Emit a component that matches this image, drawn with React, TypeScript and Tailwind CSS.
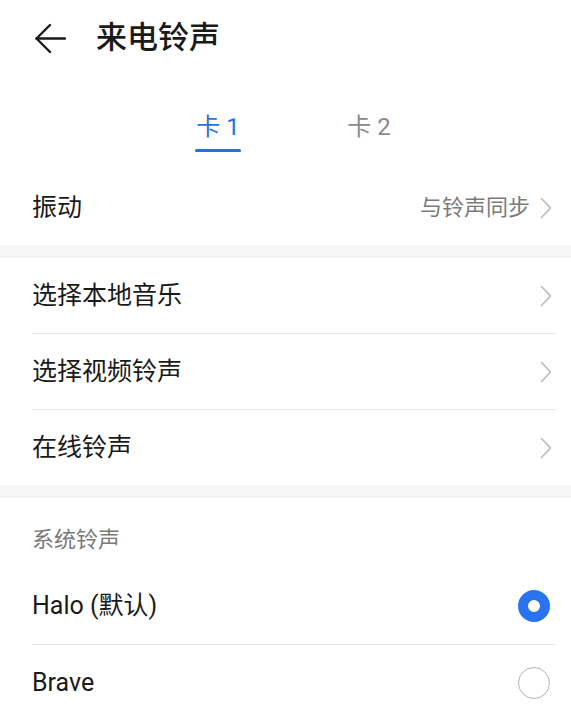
import React from "react";

const font = { fontFamily: "Roboto, 'Noto Sans CJK SC', 'Noto Sans', sans-serif" };

function Chevron() {
  return (
    <svg width="12" height="22" viewBox="0 0 12 22" fill="none">
      <polyline points="1.5,1.5 10.5,11 1.5,20.5" stroke="#b8b8b8" strokeWidth="1.5" strokeLinecap="round" strokeLinejoin="round" />
    </svg>
  );
}

function NavRow({ label, value }: { label: string; value?: string }) {
  return (
    <div className="flex h-[75px] items-center justify-between pl-[32px] pr-[19px]">
      <span className="text-[25px] leading-[32px] text-[#1a1a1a]">{label}</span>
      <div className="flex items-center gap-[10px]">
        {value && <span className="text-[22px] leading-[30px] text-[#808080]">{value}</span>}
        <Chevron />
      </div>
    </div>
  );
}

function Divider() {
  return <div className="ml-[32px] mr-[15px] h-px bg-[#e8e8e8]" />;
}

function Band() {
  return <div className="h-[13px] bg-[#f6f6f6]" />;
}

export default function App() {
  return (
    <div className="h-[710px] w-[571px] overflow-hidden bg-white" style={font}>
      <div className="flex h-[76px] items-center pl-[35px]">
        <svg width="31" height="31" viewBox="0 0 31 31" fill="none">
          <polyline points="15,2 1.5,15.5 15,29" stroke="#1a1a1a" strokeWidth="2.4" strokeLinecap="round" strokeLinejoin="round" />
          <line x1="1.5" y1="15.5" x2="30" y2="15.5" stroke="#1a1a1a" strokeWidth="2.4" strokeLinecap="round" />
        </svg>
        <span className="ml-[30px] text-[31px] font-medium leading-[40px] text-[#1a1a1a]">来电铃声</span>
      </div>

      <div className="flex h-[95px] pl-[195px] gap-[105px]">
        <div className="flex w-[46px] flex-col items-center pt-[35px]">
          <span className="text-[24px] leading-[32px] text-[#2a6fe0] whitespace-nowrap">卡 1</span>
          <div className="mt-[6px] h-[3px] w-[46px] rounded-full bg-[#2a6fe0]" />
        </div>
        <div className="flex w-[46px] flex-col items-center pt-[35px]">
          <span className="text-[24px] leading-[32px] text-[#8a8a8a] whitespace-nowrap">卡 2</span>
        </div>
      </div>

      <div className="flex h-[74px] items-center justify-between pl-[32px] pr-[19px]">
        <span className="text-[25px] leading-[32px] text-[#1a1a1a]">振动</span>
        <div className="flex items-center gap-[10px]">
          <span className="text-[22px] leading-[30px] text-[#7a7a7a]">与铃声同步</span>
          <Chevron />
        </div>
      </div>

      <Band />
      <NavRow label="选择本地音乐" />
      <Divider />
      <NavRow label="选择视频铃声" />
      <Divider />
      <NavRow label="在线铃声" />
      <Band />

      <div className="h-[70px] pl-[32px] pt-[29px]">
        <span className="text-[22px] leading-[26px] text-[#7a7a7a]">系统铃声</span>
      </div>

      <div className="flex h-[76px] items-center justify-between pl-[32px] pr-[21px]">
        <span className="text-[25px] leading-[32px] text-[#1a1a1a]">Halo (默认)</span>
        <div className="h-[32px] w-[32px] rounded-full border-[10px] border-[#2a73ee] bg-white" />
      </div>
      <Divider />
      <div className="flex h-[76px] items-center justify-between pl-[32px] pr-[21px]">
        <span className="text-[25px] leading-[32px] text-[#1a1a1a]">Brave</span>
        <div className="h-[32px] w-[32px] rounded-full border-[1.5px] border-[#b5b5b5] bg-white" />
      </div>
    </div>
  );
}
